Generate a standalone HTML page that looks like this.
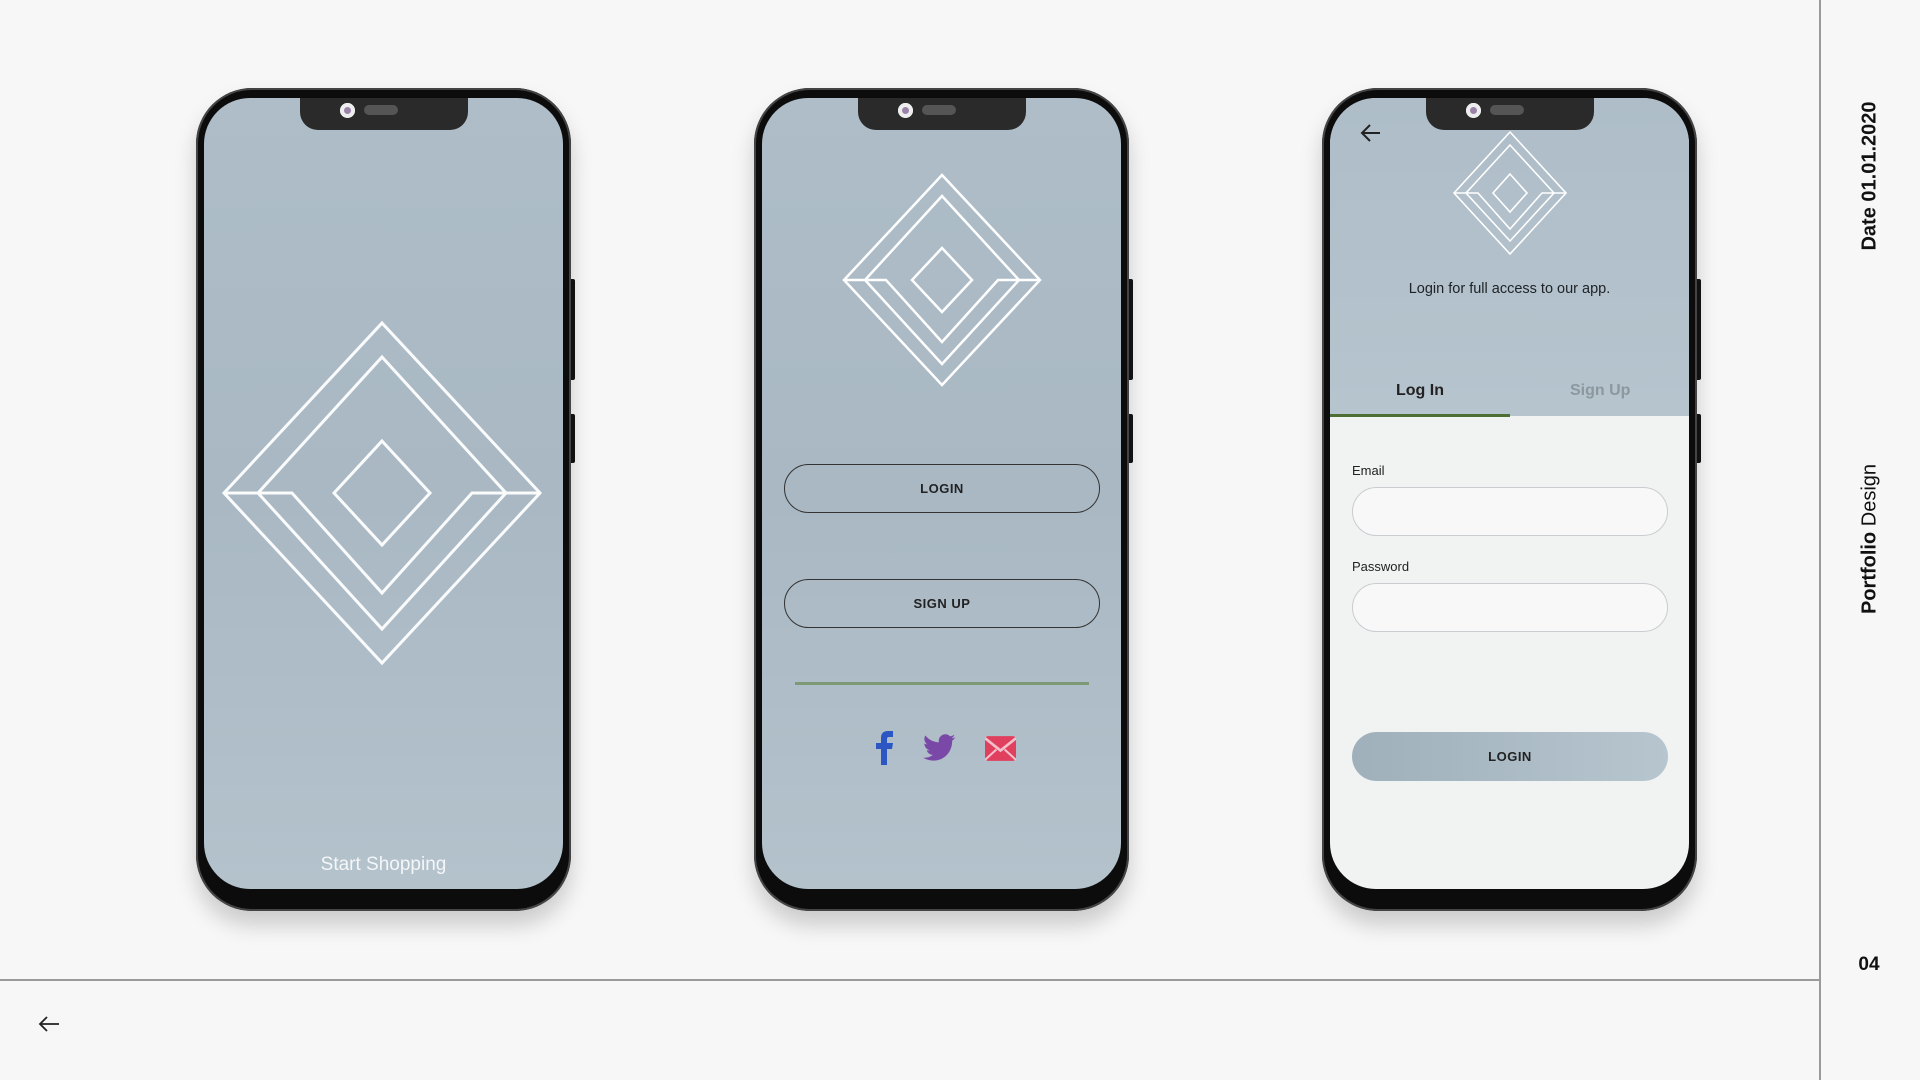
<!DOCTYPE html>
<html><head><meta charset="utf-8"><style>
*{margin:0;padding:0;box-sizing:border-box}
body{width:1920px;height:1080px;background:#f7f7f7;position:relative;overflow:hidden;font-family:"Liberation Sans",sans-serif}
.ph{position:absolute;top:88px;width:375px;height:823px;background:#0c0c0c;border-radius:56px;box-shadow:0 14px 22px rgba(0,0,0,.18),inset 0 0 0 2px #444}
.sc{position:absolute;left:8px;right:8px;top:10px;bottom:22px;border-radius:46px;background:linear-gradient(180deg,#aebdc8,#a9b8c3 50%,#b4c2cc);overflow:hidden}
.notch{position:absolute;left:96px;top:0;width:168px;height:32px;background:#2a2a2a;border-radius:0 0 18px 18px}
.cam{position:absolute;left:40px;top:5px;width:15px;height:15px;border-radius:50%;background:#eee;box-shadow:inset 0 0 0 4px #eee}
.cam:after{content:"";position:absolute;left:4px;top:4px;width:7px;height:7px;border-radius:50%;background:#9a82a8}
.spk{position:absolute;left:64px;top:7px;width:34px;height:10px;border-radius:5px;background:#555}
.btn1,.btn2{position:absolute;right:-4px;width:4px;background:#111;border-radius:0 2px 2px 0}
.btn1{top:191px;height:101px}.btn2{top:326px;height:49px}
.ob{position:absolute;border:1.5px solid #333;border-radius:25px;font-size:13px;font-weight:bold;letter-spacing:.5px;color:#222;display:flex;align-items:center;justify-content:center}
</style></head><body>

<!-- phone 1 -->
<div class="ph" style="left:196px"><div class="btn1"></div><div class="btn2"></div>
<div class="sc">
<div class="notch"><div class="cam"></div><div class="spk"></div></div>
<svg style="position:absolute;left:0;top:0" width="359" height="789" viewBox="0 0 359 789"><g transform="translate(178,395)" fill="none" stroke="#fff" stroke-width="3" opacity=".95">
<path d="M0,-170 L158,0 L0,170 L-158,0Z"/><path d="M0,-136 L124,0 L0,136 L-124,0Z"/><path d="M-158,0 H-124 M124,0 H158"/><path d="M-124,0 L-90,0 L0,100 L90,0 L124,0"/><path d="M0,-52 L48,0 L0,52 L-48,0Z"/></g></svg>
<div style="position:absolute;left:0;right:0;top:756px;text-align:center;color:#f4f6f8;font-size:19px">Start Shopping</div>
</div></div>

<!-- phone 2 -->
<div class="ph" style="left:754px"><div class="btn1"></div><div class="btn2"></div>
<div class="sc">
<div class="notch"><div class="cam"></div><div class="spk"></div></div>
<svg style="position:absolute;left:0;top:0" width="359" height="400"><g transform="translate(180,182)" fill="none" stroke="#fff" stroke-width="2.5">
<path d="M0,-105 L98,0 L0,105 L-98,0Z"/><path d="M0,-84 L77,0 L0,84 L-77,0Z"/><path d="M-98,0 H-77 M77,0 H98"/><path d="M-77,0 L-56,0 L0,62 L56,0 L77,0"/><path d="M0,-32 L30,0 L0,32 L-30,0Z"/></g></svg>
<div class="ob" style="left:22px;top:366px;width:316px;height:49px">LOGIN</div>
<div class="ob" style="left:22px;top:481px;width:316px;height:49px">SIGN UP</div>
<div style="position:absolute;left:33px;top:584px;width:294px;height:3px;background:#7e9a74"></div>
<svg style="position:absolute;left:114px;top:632px" width="20" height="36" viewBox="0 0 20 36"><path d="M5,35 V19 H0 V13 H5 V8 Q5,1 12,1 H17 V7 H13 Q11,7 11,9 V13 H17 L16,19 H11 V35Z" fill="#2b56c4"/></svg>
<svg style="position:absolute;left:161px;top:636px" width="34" height="28" viewBox="0 0 40 33"><path fill="#7a49a8" d="M38,4c-1.4,.6-2.9,1-4.5,1.2 1.6-1,2.8-2.5,3.4-4.3-1.5,.9-3.2,1.5-5,1.9C30.5,1.2,28.5,.3,26.3,.3c-4.3,0-7.800,3.5-7.800,7.8 0,.6,.1,1.2,.2,1.8C12.2,9.6,6.5,6.5,2.7,1.8c-.7,1.2-1.1,2.5-1.1,3.9 0,2.7,1.4,5.1,3.5,6.5-1.3,0-2.5-.4-3.5-1v.1c0,3.8,2.7,6.9,6.3,7.7-.7,.2-1.3,.3-2.1,.3-.5,0-1,0-1.5-.1 1,3.1,3.9,5.4,7.3,5.4-2.7,2.1-6.1,3.4-9.7,3.4-.6,0-1.3,0-1.9-.1 3.5,2.2,7.6,3.5,12,3.5 14.4,0,22.3-11.9,22.3-22.3v-1C35.6,7,37,5.6,38,4z"/></svg>
<svg style="position:absolute;left:223px;top:638px" width="31" height="25" viewBox="0 0 30 24"><rect x="0" y="0" width="30" height="24" rx="3" fill="#e0405e"/><path d="M0,2 L15,14 L30,2" fill="none" stroke="#f3c0cc" stroke-width="2.5"/><path d="M0,23 L11,13 M30,23 L19,13" stroke="#f3c0cc" stroke-width="2"/></svg>
</div></div>

<!-- phone 3 -->
<div class="ph" style="left:1322px"><div class="btn1"></div><div class="btn2"></div>
<div class="sc" style="background:#f1f2f2">
<div style="position:absolute;left:0;right:0;top:0;height:318px;background:linear-gradient(180deg,#aebdc8,#b6c4ce)"></div>
<div class="notch"><div class="cam"></div><div class="spk"></div></div>
<svg style="position:absolute;left:30px;top:25px" width="22" height="20"><path d="M20,10 H3 M10,2 L2,10 L10,18" fill="none" stroke="#222" stroke-width="2"/></svg>
<svg style="position:absolute;left:0;top:0" width="359" height="260"><g transform="translate(180,95)" fill="none" stroke="#fff" stroke-width="1.6">
<path d="M0,-61 L56,0 L0,61 L-56,0Z"/><path d="M0,-48 L44,0 L0,48 L-44,0Z"/><path d="M-56,0 H-44 M44,0 H56"/><path d="M-44,0 L-32,0 L0,36 L32,0 L44,0"/><path d="M0,-19 L17,0 L0,19 L-17,0Z"/></g></svg>
<div style="position:absolute;left:0;right:0;top:183px;text-align:center;font-size:14.5px;color:#1e2226">Login for full access to our app.</div>
<div style="position:absolute;left:66px;top:284px;font-size:16px;font-weight:bold;color:#222">Log In</div>
<div style="position:absolute;left:240px;top:284px;font-size:16px;font-weight:bold;color:#8d979e">Sign Up</div>
<div style="position:absolute;left:0;top:316px;width:180px;height:3px;background:#4e6e34"></div>
<div style="position:absolute;left:22px;top:365px;font-size:13px;color:#222">Email</div>
<div style="position:absolute;left:22px;top:389px;width:316px;height:49px;border:1.5px solid #c9cdd0;border-radius:25px;background:#f8f8f8"></div>
<div style="position:absolute;left:22px;top:461px;font-size:13px;color:#222">Password</div>
<div style="position:absolute;left:22px;top:485px;width:316px;height:49px;border:1.5px solid #c9cdd0;border-radius:25px;background:#f8f8f8"></div>
<div class="ob" style="left:22px;top:634px;width:316px;height:49px;border:none;background:linear-gradient(90deg,#9fb0bb,#b7c5ce)">LOGIN</div>
</div></div>

<div style="position:absolute;left:1819px;top:0;width:2px;height:1080px;background:#9a9a9a"></div>
<div style="position:absolute;left:0;top:979px;width:1820px;height:2px;background:#9a9a9a"></div>
<svg style="position:absolute;left:37px;top:1015px" width="24" height="18"><path d="M22,9 H3 M10,2 L3,9 L10,16" fill="none" stroke="#222" stroke-width="1.8"/></svg>
<div style="position:absolute;left:1870px;top:176px;transform:translate(-50%,-50%) rotate(-90deg);white-space:nowrap;font-size:20px;font-weight:bold;color:#111">Date 01.01.2020</div>
<div style="position:absolute;left:1870px;top:539px;transform:translate(-50%,-50%) rotate(-90deg);white-space:nowrap;font-size:20px;color:#111"><b>Portfolio</b> Design</div>
<div style="position:absolute;left:1869px;top:965px;transform:translate(-50%,-50%);font-size:19px;font-weight:bold;color:#111">04</div>
</body></html>
